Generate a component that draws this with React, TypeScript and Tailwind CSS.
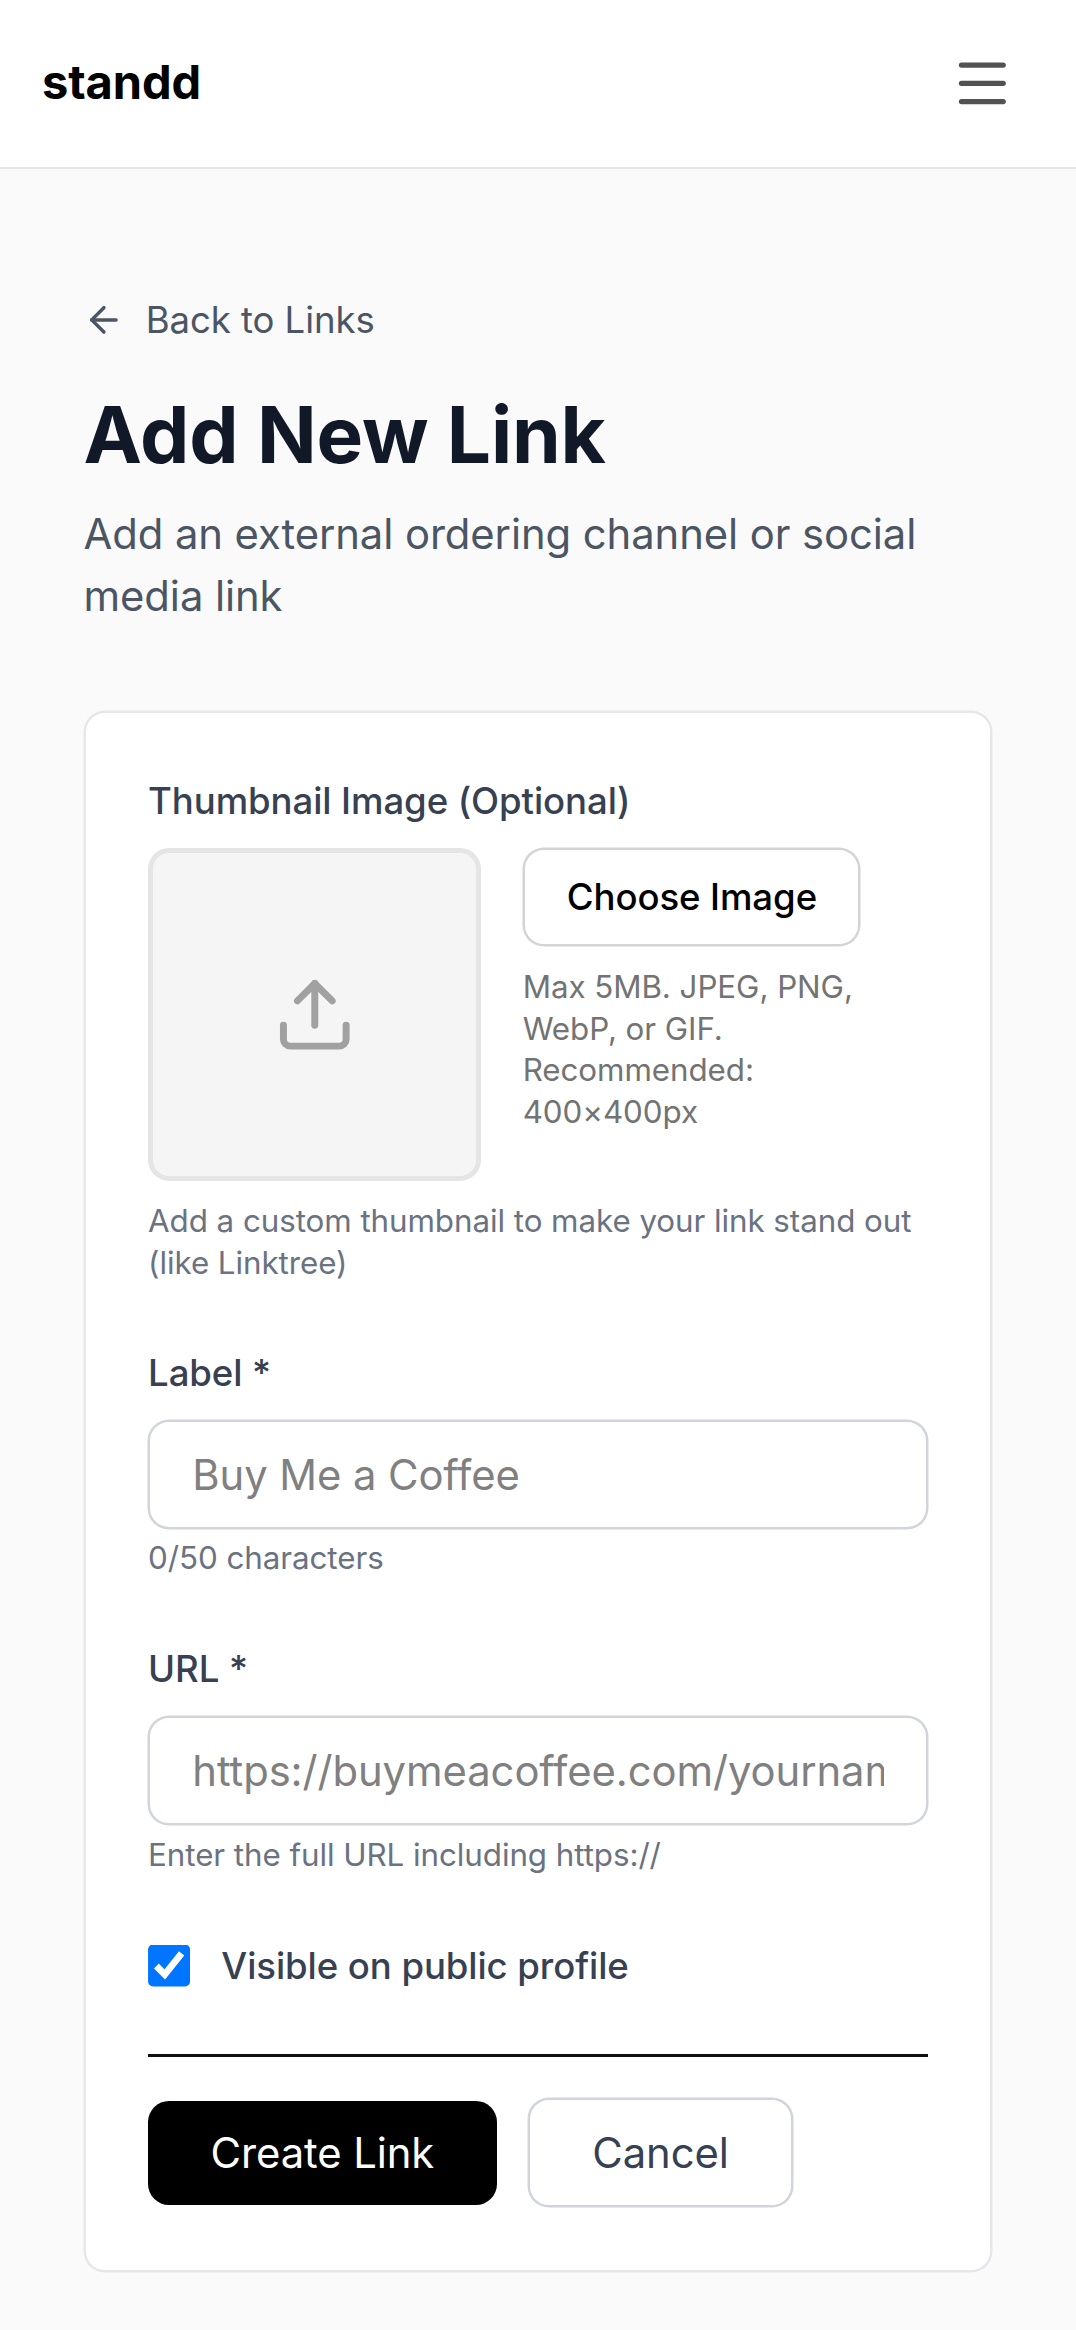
import React, { useState } from 'react'
import { ArrowLeft, Menu, Upload } from 'lucide-react'

const MAX_LABEL = 50

interface FieldProps {
  id: string
  label: string
  placeholder: string
  hint: string
  value: string
  maxLength?: number
  onChange: (value: string) => void
}

function Field({ id, label, placeholder, hint, value, maxLength, onChange }: FieldProps) {
  return (
    <div>
      <label htmlFor={id} className="block text-[36.56px] leading-[52.2px] font-medium text-[#374151]">
        {label}
      </label>
      <input
        id={id}
        type="text"
        value={value}
        maxLength={maxLength}
        placeholder={placeholder}
        onChange={(e) => onChange(e.target.value)}
        className="mt-[21px] block h-[109px] w-full rounded-[21px] border-2 border-[#d1d5db] bg-white px-[42.3px] text-[41.79px] text-black shadow-[0_0_0_0.5px_#d1d5db] placeholder:text-[#808080]"
      />
      <p className="mt-[9.3px] text-[31.34px] leading-[41.8px] text-[#6b7280]">{hint}</p>
    </div>
  )
}

export default function App() {
  const [label, setLabel] = useState('')
  const [url, setUrl] = useState('')
  const [visible, setVisible] = useState(true)

  return (
    <div className="min-h-[2330px] bg-[#fafafa] font-['Inter',sans-serif] **:tracking-[-0.002em]">
      <header className="flex h-[169px] items-center justify-between border-b-2 border-[#e5e5e5] bg-white pr-[62px] pl-[42px]">
        <span className="mb-[5px] text-[47px] leading-[73px] font-bold text-black">standd</span>
        <button type="button" aria-label="Open menu" className="text-[#525252]">
          <Menu size={62.68} />
        </button>
      </header>

      <main className="px-[83.57px] pt-[125px]">
        <a href="#" className="-ml-[1px] flex h-[52px] items-center gap-[21.4px] text-[36.56px] leading-[52px] text-[#4b5563]">
          <ArrowLeft size={41.79} />
          Back to Links
        </a>

        <h1 className="mt-[42px] text-[78.35px] leading-[94px] font-bold text-[#111827]">Add New Link</h1>
        <p className="mt-[21px] text-[41.79px] leading-[62.4px] text-[#4b5563]">
          Add an external ordering channel or social media link
        </p>

        <form className="mt-[83.2px] rounded-[21px] border-2 border-[#e5e7eb] bg-white px-[62.5px] pt-[62px] pb-[62.2px] shadow-[0_0_0_0.5px_#e5e7eb]">
          <div>
            <span className="block text-[36.56px] leading-[52px] font-medium text-[#374151]">
              Thumbnail Image (Optional)
            </span>
            <div className="mt-[21px] flex items-start gap-[41.6px]">
              <div className="flex size-[333px] shrink-0 items-center justify-center rounded-[21px] border-[5px] border-[#e5e5e5] bg-[#f5f5f5] text-[#a1a1a1]">
                <Upload size={83.57} />
              </div>
              <div>
                <button
                  type="button"
                  className="block h-[98px] w-[337.5px] rounded-[21px] border-2 border-[#d4d4d4] bg-white pl-[1px] text-[36.56px] leading-[52px] font-medium text-black shadow-[0_0_0_0.5px_#d4d4d4]"
                >
                  Choose Image
                </button>
                <p className="mt-[20.8px] text-[31.34px] leading-[41.8px] text-[#737373]">
                  Max 5MB. JPEG, PNG, WebP, or GIF. Recommended: 400×400px
                </p>
              </div>
            </div>
            <p className="mt-[20px] text-[31.34px] leading-[41.8px] text-[#6b7280]">
              Add a custom thumbnail to make your link stand out (like Linktree)
            </p>
          </div>

          <div className="mt-[62.4px] space-y-[63px]">
            <Field
              id="label"
              label="Label *"
              placeholder="Buy Me a Coffee"
              hint={`${label.length}/${MAX_LABEL} characters`}
              value={label}
              maxLength={MAX_LABEL}
              onChange={setLabel}
            />
            <Field
              id="url"
              label="URL *"
              placeholder="https://buymeacoffee.com/yourname"
              hint="Enter the full URL including https://"
              value={url}
              onChange={setUrl}
            />
            <label className="flex h-[52px] items-center gap-[31.3px] text-[36.56px] leading-[52px] font-medium text-[#374151]">
              <input
                type="checkbox"
                checked={visible}
                onChange={(e) => setVisible(e.target.checked)}
                className="size-[42px] [clip-path:inset(0_round_5px)]"
              />
              Visible on public profile
            </label>
          </div>

          <div className="mt-[62.3px] flex items-center gap-[31.3px] border-t-[3px] border-[#111111] pt-[41.5px]">
            <button type="button" className="h-[104.5px] w-[348.7px] rounded-[21px] bg-black text-[41.79px] text-white">
              Create Link
            </button>
            <button
              type="button"
              className="h-[109px] w-[265px] rounded-[21px] border-2 border-[#d1d5db] bg-white text-[41.79px] text-[#374151] shadow-[0_0_0_0.5px_#d1d5db]"
            >
              Cancel
            </button>
          </div>
        </form>
      </main>
    </div>
  )
}
